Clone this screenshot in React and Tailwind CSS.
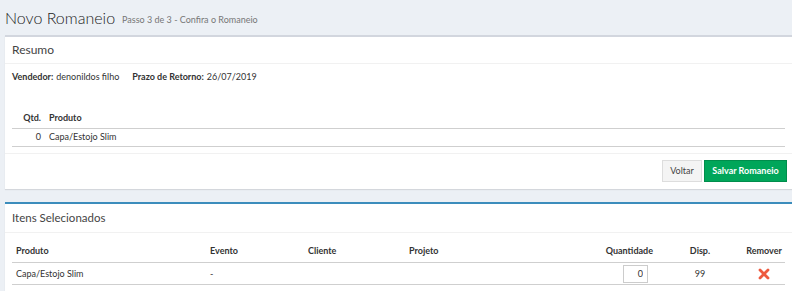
import React from 'react';

const FONT = "font-['Lato','Liberation_Sans',sans-serif]";

const itens = [
  { produto: 'Capa/Estojo Slim', evento: '-', cliente: '', projeto: '', qtd: 0, disp: 99 },
];

const RemoveIcon = () => (
  <svg width="12" height="12" viewBox="0 0 12 12" className="inline-block">
    <path d="M2 2 L10 10 M10 2 L2 10" stroke="#ee5a3f" strokeWidth="2.8" strokeLinecap="round" />
  </svg>
);

const App = () => {
  return (
    <div className={`${FONT} bg-[#ecf0f5] w-[792px] h-[291px] overflow-hidden text-[9px] text-[#333]`}>
      {/* cabeçalho da página */}
      <div className="h-[35px] pl-[5px] flex items-center">
        <h1 className="text-[16px] font-light text-[#222] leading-none">Novo Romaneio</h1>
        <small className="ml-[7px] mt-[3px] text-[9px] text-[#777] leading-none">Passo 3 de 3 - Confira o Romaneio</small>
      </div>

      {/* Resumo */}
      <div className="ml-[5px] w-[792px] bg-white border-t-2 border-[#d2d6de] shadow-[0_1px_1px_rgba(0,0,0,0.1)]">
        <div className="h-[27px] px-[7px] flex items-center border-b border-[#f1f1f1]">
          <h3 className="text-[12px] text-[#444] leading-none">Resumo</h3>
        </div>
        <div className="px-[7px] pt-[6px] pb-[6px]">
          <p className="h-[14px] flex items-center">
            <b className="font-bold">Vendedor:</b>
            <span className="ml-[3px]">denonildos filho</span>
            <b className="font-bold ml-[13px]">Prazo de Retorno:</b>
            <span className="ml-[3px]">26/07/2019</span>
          </p>
          <table className="mt-[23px] w-[773px] border-collapse">
            <thead>
              <tr className="h-[21px] border-b border-[#cfcfcf]">
                <th className="w-[33px] pr-[4px] text-right font-bold">Qtd.</th>
                <th className="pl-[4px] text-left font-bold">Produto</th>
              </tr>
            </thead>
            <tbody>
              <tr className="h-[18px] border-b border-[#cfcfcf]">
                <td className="pr-[4px] text-right">0</td>
                <td className="pl-[4px]">Capa/Estojo Slim</td>
              </tr>
            </tbody>
          </table>
        </div>
        <div className="h-[36px] border-t border-[#f1f1f1] flex items-center justify-end pr-[10px] gap-[2px]">
          <button className="w-[40px] h-[22px] bg-[#f4f4f4] border border-[#ddd] text-[#444] text-[9px]">Voltar</button>
          <button className="w-[83px] h-[22px] bg-[#00a65a] border border-[#008d4c] text-white font-bold text-[9px]">Salvar Romaneio</button>
        </div>
      </div>

      {/* Itens Selecionados */}
      <div className="mt-[13px] ml-[5px] w-[792px] bg-white border-t-2 border-[#3c8dbc] shadow-[0_1px_1px_rgba(0,0,0,0.1)]">
        <div className="h-[29px] px-[7px] pt-[1px] flex items-center border-b border-[#f1f1f1]">
          <h3 className="text-[11.5px] text-[#444] leading-none">Itens Selecionados</h3>
        </div>
        <div className="px-[7px] pt-[7px] pb-[10px]">
          <table className="w-[773px] border-collapse table-fixed">
            <thead>
              <tr className="h-[23px] border-b border-[#cfcfcf] font-bold">
                <th className="w-[194px] pl-[4px] text-left">Produto</th>
                <th className="w-[98px] pl-[4px] text-left">Evento</th>
                <th className="w-[101px] pl-[4px] text-left">Cliente</th>
                <th className="w-[155px] pl-[4px] text-left">Projeto</th>
                <th className="w-[97px] pr-[4px] text-right">Quantidade</th>
                <th className="w-[86px] text-center">Disp.</th>
                <th className="w-[42px] text-center">Remover</th>
              </tr>
            </thead>
            <tbody>
              {itens.map((item, i) => (
                <tr key={i} className="h-[22px] border-b border-[#cfcfcf]">
                  <td className="pl-[4px]">{item.produto}</td>
                  <td className="pl-[4px]">{item.evento}</td>
                  <td className="pl-[4px]">{item.cliente}</td>
                  <td className="pl-[4px]">{item.projeto}</td>
                  <td className="pr-[9px] text-right">
                    <input
                      readOnly
                      value={item.qtd}
                      className="w-[25px] h-[18px] border border-[#ccc] text-right pr-[4px] text-[9px] align-middle"
                    />
                  </td>
                  <td className="text-center">{item.disp}</td>
                  <td className="text-center"><RemoveIcon /></td>
                </tr>
              ))}
            </tbody>
          </table>
        </div>
      </div>
    </div>
  );
};

export default App;
